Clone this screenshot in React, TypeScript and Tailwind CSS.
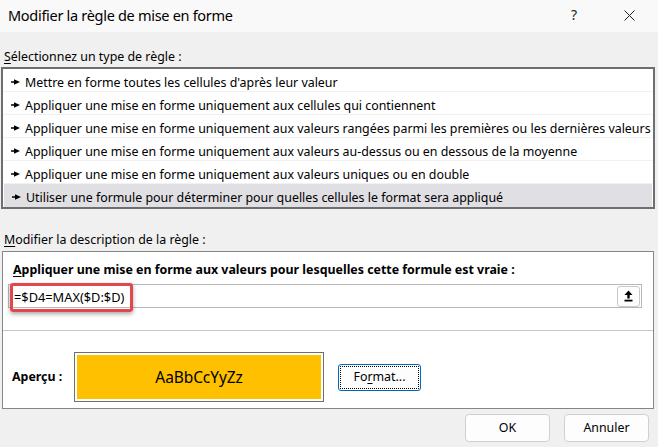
import React from "react";

const rows = [
  "Mettre en forme toutes les cellules d'après leur valeur",
  "Appliquer une mise en forme uniquement aux cellules qui contiennent",
  "Appliquer une mise en forme uniquement aux valeurs rangées parmi les premières ou les dernières valeurs",
  "Appliquer une mise en forme uniquement aux valeurs au-dessus ou en dessous de la moyenne",
  "Appliquer une mise en forme uniquement aux valeurs uniques ou en double",
  "Utiliser une formule pour déterminer pour quelles cellules le format sera appliqué",
];

function Arrow() {
  return (
    <svg width="9" height="6" viewBox="0 0 9 6" className="shrink-0 mt-[3px]">
      <line x1="0" y1="3" x2="4" y2="3" stroke="#000" strokeWidth="1.5" />
      <polygon points="3,0.2 9,3 3,5.8" fill="#000" />
    </svg>
  );
}

export default function App() {
  return (
    <div
      className="w-[658px] h-[447px] bg-[#f0f0f0] text-black overflow-hidden flex flex-col"
      style={{ fontFamily: '"Noto Sans", "Open Sans", sans-serif' }}
    >
      {/* title bar */}
      <div className="h-[32px] shrink-0 bg-[#f9f9f9] flex items-center pl-[8px]">
        <div className="text-[14.5px] leading-none flex-1 pb-[2px] tracking-[-0.3px]">Modifier la règle de mise en forme</div>
        <div className="text-[14px] leading-none pb-[2px] w-[10px] mr-[43px] text-[#222]">?</div>
        <svg width="11" height="11" viewBox="0 0 11 11" className="mr-[23px] mb-[1px]">
          <line x1="0.5" y1="0.5" x2="10.5" y2="10.5" stroke="#222" strokeWidth="1" />
          <line x1="10.5" y1="0.5" x2="0.5" y2="10.5" stroke="#222" strokeWidth="1" />
        </svg>
      </div>

      {/* label */}
      <div className="h-[16px] shrink-0 mt-[15px] mb-[4px] pl-[4px] pt-[2px] text-[12.4px] leading-[16px]">
        <span className="underline underline-offset-2">S</span>électionnez un type de règle :
      </div>

      {/* list */}
      <div className="shrink-0 ml-[1px] mr-[3px] border-2 border-[#6e6e6e] bg-white flex flex-col">
        {rows.map((r, i) => (
          <div
            key={i}
            className={
              "h-[23px] flex items-center pl-[8px] gap-[5px] text-[12.4px] whitespace-nowrap " +
              (i === rows.length - 1
                ? "bg-[#e0dfe4] mx-px"
                : "border-b border-[#f1f1f1]")
            }
          >
            <Arrow />
            <span className="leading-none pt-[6px]">{r}</span>
          </div>
        ))}
      </div>

      {/* label 2 */}
      <div className="h-[16px] shrink-0 mt-[23px] mb-[3px] pl-[4px] text-[12.4px] leading-[16px]">
        <span className="underline underline-offset-2">M</span>odifier la description de la règle :
      </div>

      {/* description box */}
      <div className="shrink-0 ml-[2px] mr-[4px] border border-[#858585] bg-white flex flex-col">
        <div className="h-[16px] mt-[10px] pl-[10px] text-[12.4px] leading-[16px] font-bold">
          <span className="underline underline-offset-2">A</span>ppliquer une mise en forme aux valeurs pour lesquelles cette formule est vraie :
        </div>
        <div className="relative ml-[5px] mr-[11px] mt-[6px] h-[24px] border border-[#b8b8b8] bg-white flex items-center">
          <div className="flex-1 pl-[5px] text-[12.8px] leading-none pt-[2px]">=$D4=MAX($D:$D)</div>
          <div className="w-[23px] h-[21px] mr-px rounded-[3px] border border-[#c9c9c9] bg-[#fdfdfd] flex items-center justify-center">
            <svg width="9" height="12" viewBox="0 0 9 12">
              <polygon points="4.5,0.5 8.5,5 0.5,5" fill="#000" />
              <rect x="3.3" y="4.5" width="2.4" height="4" fill="#000" />
              <rect x="0.5" y="9.7" width="8" height="1.8" fill="#000" />
            </svg>
          </div>
          <div className="absolute left-[1px] top-[-2px] w-[123px] h-[29px] rounded-[3px] border-[3px] border-[#e3464b] shadow-[0_2px_4px_rgba(0,0,0,0.35)]" />
        </div>
        <div className="mt-[22px] h-px bg-[#c6c6c6]" />
        <div className="mt-[21px] mb-[6px] h-[50px] flex items-center pl-[9px]">
          <div className="w-[62px] text-[12.4px] font-bold leading-none pt-[1px]">Aperçu :</div>
          <div className="w-[250px] h-[50px] border border-[#6f6f6f] p-[2px] bg-white">
            <div className="w-full h-full bg-[#ffc000] flex items-center justify-center text-[15.5px] leading-none tracking-[-0.1px] pt-[1px]">
              AaBbCcYyZz
            </div>
          </div>
          <div className="ml-[14px] w-[83px] h-[27px] rounded-[3px] border border-[#0067c0] bg-[#fdfdfd] p-px">
            <div className="w-full h-full border border-dotted border-black rounded-[1px] flex items-center justify-center text-[12.4px] leading-none">
              Fo<span className="underline underline-offset-2">r</span>mat...
            </div>
          </div>
        </div>
      </div>

      {/* buttons */}
      <div className="shrink-0 mt-[5px] flex justify-end gap-[14px] pr-[9px]">
        <div className="w-[85px] h-[28px] rounded-[4px] border border-[#d0d0d0] bg-[#fdfdfd] flex items-center justify-center text-[12.4px] leading-none">
          OK
        </div>
        <div className="w-[85px] h-[28px] rounded-[4px] border border-[#d0d0d0] bg-[#fdfdfd] flex items-center justify-center text-[12.4px] leading-none">
          Annuler
        </div>
      </div>
    </div>
  );
}
